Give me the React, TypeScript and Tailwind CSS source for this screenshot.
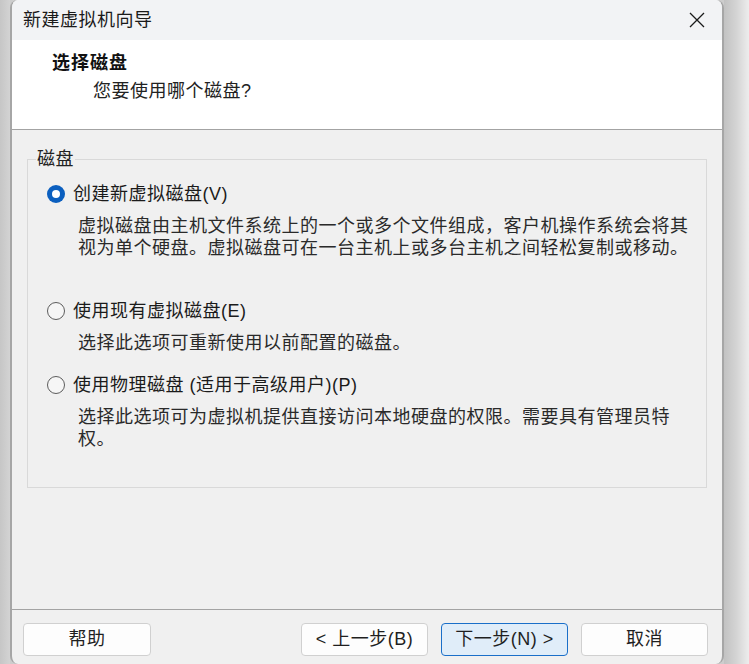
import React from 'react';

const Radio: React.FC<{ checked?: boolean }> = ({ checked }) =>
  checked ? (
    <span className="flex h-[18px] w-[18px] shrink-0 items-center justify-center rounded-full bg-[#0b5fbf]">
      <span className="h-[8px] w-[8px] rounded-full bg-white" />
    </span>
  ) : (
    <span className="h-[18px] w-[18px] shrink-0 rounded-full border border-[#5c5c5c] bg-[#f6f6f6]" />
  );

const Option: React.FC<{ checked?: boolean; label: React.ReactNode; lines: string[]; className?: string }> = ({
  checked,
  label,
  lines,
  className,
}) => (
  <div className={className}>
    <div className="flex items-center gap-[8px] leading-[22px] text-[#1b1b1b]">
      <Radio checked={checked} />
      <span className="whitespace-nowrap">{label}</span>
    </div>
    <div className="mt-[10px] pl-[31px] leading-[22px] whitespace-nowrap text-[#2a2a2a]">
      {lines.map((l) => (
        <div key={l}>{l}</div>
      ))}
    </div>
  </div>
);

const Button: React.FC<{ children: React.ReactNode; primary?: boolean; className?: string }> = ({
  children,
  primary,
  className = 'w-[127px]',
}) => (
  <button
    className={`flex h-[33px] items-center justify-center rounded-[4px] border text-[18px] text-[#1f1f1f] ${className} ${
      primary ? 'border-[#1a6fc9] bg-[#e0edf9]' : 'border-[#d0d0d0] bg-[#fdfdfd]'
    }`}
  >
    {children}
  </button>
);

export default function App() {
  return (
    <div className="flex h-[664px] w-[749px] overflow-hidden bg-[#cdcdcd] font-['Liberation_Sans','Noto_Sans_CJK_SC',sans-serif] text-[18px] tracking-[0.5px]">
      <div className="w-[10px] bg-gradient-to-r from-[#c6c6c6] to-[#d3d3d3]" />

      <div className="flex w-[714px] flex-col overflow-hidden rounded-[8px] border-x-2 border-[#a6a6a6] bg-[#f0f0f0]">
        {/* title bar */}
        <div className="flex h-[40px] shrink-0 items-center justify-between bg-[#f2f3f5] pl-[11px]">
          <span className="text-[#1a1a1a]">新建虚拟机向导</span>
          <svg className="mr-[17px]" width="16" height="16" viewBox="0 0 16 16" fill="none">
            <path d="M1 1 L15 15 M15 1 L1 15" stroke="#1a1a1a" strokeWidth="1.3" />
          </svg>
        </div>

        {/* header */}
        <div className="h-[90px] shrink-0 border-b border-[#a3a3a3] bg-white pt-[12px] leading-[22px]">
          <div className="pl-[40px] font-bold tracking-[1px] text-[#111]">选择磁盘</div>
          <div className="mt-[6px] pl-[81px] text-[#222]">您要使用哪个磁盘?</div>
        </div>

        {/* body */}
        <div className="flex-1 pt-[18px]">
          <fieldset className="mx-[15px] border border-[#d9d9d9] p-0">
            <legend className="ml-[8px] px-[1px] leading-[22px] text-[#222]">磁盘</legend>
            <div className="pt-[13px] pb-[37px] pl-[19px]">
              <Option
                checked
                label="创建新虚拟磁盘(V)"
                lines={[
                  '虚拟磁盘由主机文件系统上的一个或多个文件组成，客户机操作系统会将其',
                  '视为单个硬盘。虚拟磁盘可在一台主机上或多台主机之间轻松复制或移动。',
                ]}
              />
              <Option
                className="mt-[41px]"
                label="使用现有虚拟磁盘(E)"
                lines={['选择此选项可重新使用以前配置的磁盘。']}
              />
              <Option
                className="mt-[20px]"
                label="使用物理磁盘 (适用于高级用户)(P)"
                lines={['选择此选项可为虚拟机提供直接访问本地硬盘的权限。需要具有管理员特', '权。']}
              />
            </div>
          </fieldset>
        </div>

        {/* footer */}
        <div className="flex h-[55px] shrink-0 items-start border-t border-[#a3a3a3] pt-[13px] pr-[14px] pl-[11px]">
          <Button className="w-[128px]">帮助</Button>
          <div className="flex-1" />
          <div className="flex gap-[13px]">
            <Button>&lt; 上一步(B)</Button>
            <Button primary>下一步(N) &gt;</Button>
            <Button>取消</Button>
          </div>
        </div>
      </div>

      <div className="flex-1 bg-gradient-to-r from-[#c2c2c2] via-[#d4d4d4] to-[#ededed]" />
    </div>
  );
}
